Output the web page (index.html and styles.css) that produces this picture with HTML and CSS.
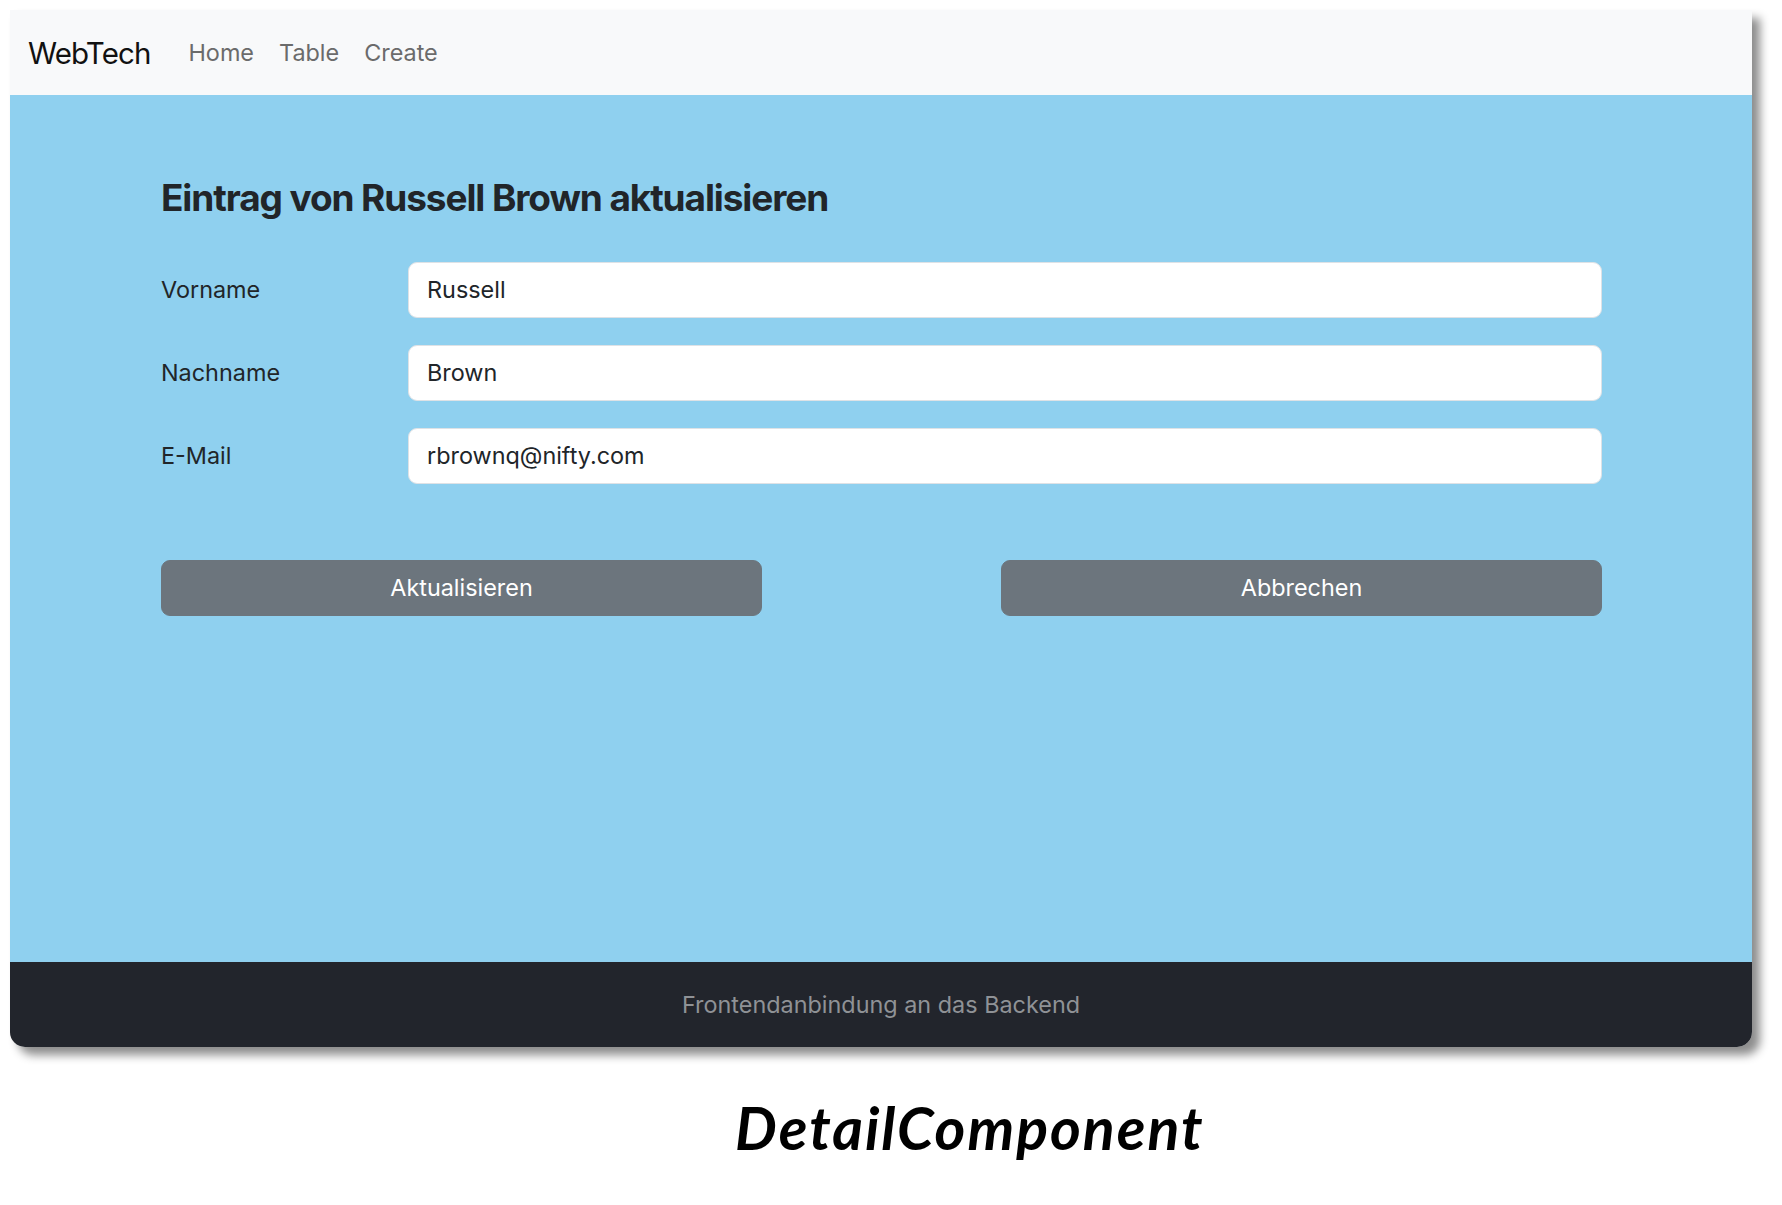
FILE: index.html
```html
<!DOCTYPE html>
<html lang="de">
<head>
<meta charset="utf-8">
<title>WebTech – Detail</title>
<link rel="stylesheet" href="styles.css">
</head>
<body>
<div class="panel">
  <nav class="navbar">
    <span class="brand">WebTech</span>
    <a class="nav-link" href="#">Home</a>
    <a class="nav-link" href="#">Table</a>
    <a class="nav-link" href="#">Create</a>
  </nav>
  <main class="main">
    <div class="container">
      <h2 class="title">Eintrag von Russell Brown aktualisieren</h2>
      <form class="form">
        <div class="row">
          <label class="label" for="vorname">Vorname</label>
          <input class="input" id="vorname" type="text" value="Russell">
        </div>
        <div class="row">
          <label class="label" for="nachname">Nachname</label>
          <input class="input" id="nachname" type="text" value="Brown">
        </div>
        <div class="row">
          <label class="label" for="email">E-Mail</label>
          <input class="input" id="email" type="text" value="rbrownq@nifty.com">
        </div>
        <div class="buttons">
          <button class="btn" type="button">Aktualisieren</button>
          <button class="btn" type="button">Abbrechen</button>
        </div>
      </form>
    </div>
  </main>
  <footer class="footer">Frontendanbindung an das Backend</footer>
</div>
<div class="caption">DetailComponent</div>
</body>
</html>
```
FILE: styles.css
```css
html, body {
  margin: 0;
  padding: 0;
  background: #ffffff;
}

body {
  font-family: Inter, "Noto Sans", "Liberation Sans", sans-serif;
  color: #212529;
  padding: 10px 0 0 10px;
}

.panel {
  width: 1742px;
  height: 1037px;
  display: flex;
  flex-direction: column;
  border-radius: 0 0 15px 15px;
  box-shadow: 8px 8px 10px rgba(0, 0, 0, 0.45);
  overflow: hidden;
}

.navbar {
  height: 85px;
  flex: 0 0 85px;
  background: #f8f9fa;
  display: flex;
  align-items: center;
  padding-left: 18px;
  box-sizing: border-box;
}

.brand {
  font-size: 29.5px;
  color: #111111;
  margin-right: 38px;
  letter-spacing: -0.9px;
}

.nav-link {
  font-size: 23.4px;
  color: #6b6b6b;
  text-decoration: none;
  margin-right: 25px;
}

.main {
  flex: 1 1 auto;
  background: #8fd0ef;
}

.container {
  width: 1441px;
  margin-left: 151px;
  padding-top: 80px;
}

.title {
  margin: 0 0 41px 0;
  font-size: 37px;
  line-height: 45.6px;
  font-weight: 700;
  color: #212529;
  letter-spacing: -1.1px;
}

.form {
  display: flex;
  flex-direction: column;
  gap: 27px;
}

.row {
  display: grid;
  grid-template-columns: 247px 1fr;
  align-items: center;
}

.label {
  font-size: 23.4px;
  color: #212529;
}

.input {
  height: 56px;
  box-sizing: border-box;
  border: 1px solid #dee2e6;
  border-radius: 9px;
  background: #ffffff;
  padding: 0 18px;
  font-family: Inter, "Noto Sans", "Liberation Sans", sans-serif;
  font-size: 23.4px;
  color: #212529;
  outline: none;
}

.buttons {
  display: flex;
  justify-content: space-between;
  margin-top: 49px;
}

.btn {
  width: 601px;
  height: 56px;
  border: 1px solid #6c757d;
  border-radius: 9px;
  background: #6c757d;
  color: #ffffff;
  font-family: Inter, "Noto Sans", "Liberation Sans", sans-serif;
  font-size: 23.4px;
  padding: 0;
}

.footer {
  height: 85px;
  flex: 0 0 85px;
  background: #22252c;
  color: #8f9296;
  font-size: 23.4px;
  display: flex;
  align-items: center;
  justify-content: center;
}

.caption {
  margin-top: 45px;
  margin-left: 725px;
  font-family: Lato, "Open Sans", sans-serif;
  font-style: italic;
  font-weight: 700;
  font-size: 59px;
  letter-spacing: 2px;
  color: #000000;
}
```
